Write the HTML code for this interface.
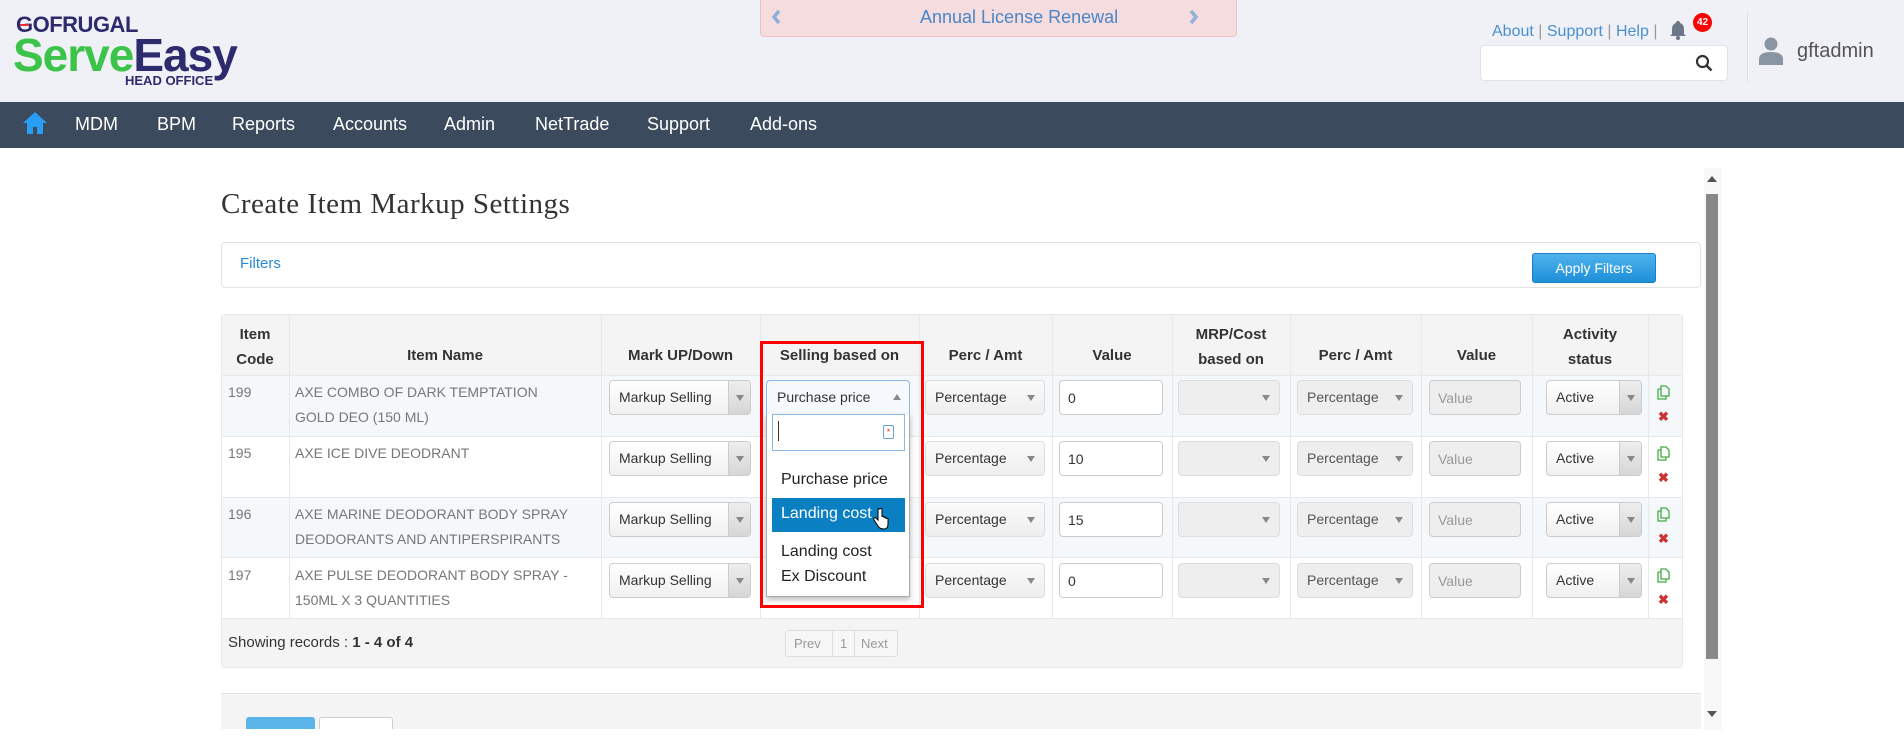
<!DOCTYPE html>
<html><head><meta charset="utf-8"><style>
*{box-sizing:border-box;margin:0;padding:0}
body{width:1904px;height:756px;overflow:hidden;background:#fff;font-family:"Liberation Sans",Arial,sans-serif;position:relative}
.a{position:absolute}
.hdr{left:0;top:0;width:1904px;height:102px;background:#f0f1f6}
.nav{left:0;top:102px;width:1904px;height:46px;background:#3c4a5e}
.th{position:absolute;font-weight:bold;font-size:15px;color:#333;text-align:center}
.td{position:absolute;font-size:14px;color:#777;line-height:25px}
.sel{position:absolute;height:35px;border:1px solid #ccc;border-radius:4px;background:linear-gradient(#fff,#f0f0f0);font-size:14px;color:#333;padding:8px 0 0 9px}
.sel .ar{position:absolute;right:0;top:0;bottom:0;width:22px;border-left:1px solid #ccc;background:linear-gradient(#eee,#d6d6d6);border-radius:0 3px 3px 0}
.sel .ar:after,.dis:after{content:"";position:absolute;left:7px;top:14px;border:4px solid transparent;border-top:6px solid #888}
.dis{position:absolute;height:35px;border:1px solid #ddd;border-radius:4px;background:#eee;font-size:14px;color:#555;padding:8px 0 0 9px}
.dis:after{left:auto;right:9px}
.inp{position:absolute;height:35px;border:1px solid #ccc;border-radius:4px;background:#fff;font-size:14px;color:#333;padding:9px 0 0 8px}
.vd{position:absolute;height:35px;border:1px solid #ccc;border-radius:4px;background:#eee;font-size:14px;color:#999;padding:9px 0 0 8px}
.ic2{position:absolute;color:#c33;font-size:13px;font-weight:bold}
</style></head><body>
<div class="a hdr"></div>
<div class="a" style="left:16px;top:12px;font-size:22px;font-weight:bold;color:#2d2a6e;letter-spacing:-0.5px">GOFRUGAL</div>
<div class="a" style="left:20px;top:24px;width:9px;height:2px;background:#e33"></div>
<div class="a" style="left:13px;top:31px;font-size:46px;font-weight:bold;letter-spacing:-1px;line-height:48px"><span style="color:#3cc34a">Serve</span><span style="color:#2d2a6e">Easy</span></div>
<div class="a" style="left:125px;top:73px;font-size:13px;font-weight:bold;color:#2d2a6e">HEAD OFFICE</div>
<div class="a" style="left:760px;top:0;width:477px;height:37px;background:#f4dcdf;border:1px solid #ecc2c8;border-top:none;border-radius:0 0 4px 4px"></div>
<svg class="a" style="left:771px;top:9px" width="10" height="16" viewBox="0 0 10 16"><path d="M8 2L3 8l5 6" fill="none" stroke="#8fb0d8" stroke-width="3.5"/></svg>
<svg class="a" style="left:1189px;top:9px" width="10" height="16" viewBox="0 0 10 16"><path d="M2 2l5 6-5 6" fill="none" stroke="#8fb0d8" stroke-width="3.5"/></svg>
<div class="a" style="left:920px;top:7px;color:#4a86c8;font-size:18px">Annual License Renewal</div>
<div class="a" style="left:1492px;top:23px;color:#4a90d0;font-size:16px">About <span style="color:#999">|</span> Support <span style="color:#999">|</span> Help <span style="color:#999">|</span></div>
<svg class="a" style="left:1669px;top:20px" width="18" height="20" viewBox="0 0 18 20"><path d="M9 1a2 2 0 0 1 2 2c3 1 4 3 4 7v4l2 2H1l2-2v-4c0-4 1-6 4-7a2 2 0 0 1 2-2z" fill="#6b7686"/><circle cx="9" cy="18" r="2" fill="#6b7686"/></svg>
<div class="a" style="left:1693px;top:13px;width:19px;height:19px;border-radius:50%;background:#f00;color:#fff;font-size:10px;font-weight:bold;text-align:center;line-height:19px">42</div>
<div class="a" style="left:1480px;top:45px;width:248px;height:36px;background:#fff;border:1px solid #e0e2e8;border-radius:4px"></div>
<svg class="a" style="left:1695px;top:54px" width="18" height="18" viewBox="0 0 18 18"><circle cx="7.5" cy="7.5" r="5.5" fill="none" stroke="#333" stroke-width="2.2"/><path d="M11.5 11.5l5 5" stroke="#333" stroke-width="2.6"/></svg>
<div class="a" style="left:1747px;top:12px;width:1px;height:70px;background:#dde"></div>
<svg class="a" style="left:1759px;top:37px" width="24" height="28" viewBox="0 0 24 28"><circle cx="12" cy="7" r="6.5" fill="#8a95a3"/><path d="M0 28v-6c0-5 5-7 12-7s12 2 12 7v6z" fill="#8a95a3"/></svg>
<div class="a" style="left:1797px;top:40px;color:#555;font-size:20px">gftadmin</div>
<div class="a nav"></div>
<svg class="a" style="left:22px;top:111px" width="26" height="24" viewBox="0 0 26 24"><path d="M13 1L1 12h4v11h6v-7h4v7h6V12h4z" fill="#2a9df4"/></svg>
<span class="a" style="left:75px;top:114px;color:#fff;font-size:18px">MDM</span>
<span class="a" style="left:157px;top:114px;color:#fff;font-size:18px">BPM</span>
<span class="a" style="left:232px;top:114px;color:#fff;font-size:18px">Reports</span>
<span class="a" style="left:333px;top:114px;color:#fff;font-size:18px">Accounts</span>
<span class="a" style="left:444px;top:114px;color:#fff;font-size:18px">Admin</span>
<span class="a" style="left:535px;top:114px;color:#fff;font-size:18px">NetTrade</span>
<span class="a" style="left:647px;top:114px;color:#fff;font-size:18px">Support</span>
<span class="a" style="left:750px;top:114px;color:#fff;font-size:18px">Add-ons</span>
<!-- scrollbar -->
<div class="a" style="left:1704px;top:168px;width:18px;height:562px;background:#f8f8f8"></div>
<div class="a" style="left:1706px;top:194px;width:12px;height:465px;background:#888"></div>
<div class="a" style="left:1707px;top:176px;border:5px solid transparent;border-bottom:6px solid #555;border-top:none"></div>
<div class="a" style="left:1707px;top:711px;border:5px solid transparent;border-top:6px solid #555;border-bottom:none"></div>
<div class="a" style="left:221px;top:188px;font-family:'Liberation Serif',serif;font-size:29px;color:#333;letter-spacing:0.5px">Create Item Markup Settings</div>
<div class="a" style="left:221px;top:242px;width:1480px;height:46px;border:1px solid #e2e2e2;border-radius:4px;background:#fff"></div>
<div class="a" style="left:240px;top:255px;color:#2a8ad8;font-size:15px">Filters</div>
<div class="a" style="left:1532px;top:253px;width:124px;height:30px;background:linear-gradient(#4fb3ee,#1d8fd8);border:1px solid #1a7fc4;border-radius:3px;color:#fff;font-size:14px;text-align:center;line-height:28px">Apply Filters</div>
<!-- table -->
<div class="a" style="left:221px;top:314px;width:1462px;height:354px;border:1px solid #e8e8e8;border-radius:4px;background:#fff"></div>
<div class="a" style="left:222px;top:315px;width:1460px;height:60px;background:#f4f4f4"></div>
<div class="a" style="left:222px;top:375px;width:1460px;height:61px;background:#f5f8fb"></div>
<div class="a" style="left:222px;top:497px;width:1460px;height:60px;background:#f5f8fb"></div>
<div class="a" style="left:222px;top:618px;width:1460px;height:49px;background:#f4f4f4"></div>
<div class="a" style="left:222px;top:375px;width:1460px;height:1px;background:#e8e8e8"></div>
<div class="a" style="left:222px;top:436px;width:1460px;height:1px;background:#e8e8e8"></div>
<div class="a" style="left:222px;top:497px;width:1460px;height:1px;background:#e8e8e8"></div>
<div class="a" style="left:222px;top:557px;width:1460px;height:1px;background:#e8e8e8"></div>
<div class="a" style="left:222px;top:618px;width:1460px;height:1px;background:#e8e8e8"></div>
<div class="a" style="left:289px;top:315px;width:1px;height:303px;background:#e8e8e8"></div>
<div class="a" style="left:601px;top:315px;width:1px;height:303px;background:#e8e8e8"></div>
<div class="a" style="left:760px;top:315px;width:1px;height:303px;background:#e8e8e8"></div>
<div class="a" style="left:919px;top:315px;width:1px;height:303px;background:#e8e8e8"></div>
<div class="a" style="left:1052px;top:315px;width:1px;height:303px;background:#e8e8e8"></div>
<div class="a" style="left:1172px;top:315px;width:1px;height:303px;background:#e8e8e8"></div>
<div class="a" style="left:1290px;top:315px;width:1px;height:303px;background:#e8e8e8"></div>
<div class="a" style="left:1421px;top:315px;width:1px;height:303px;background:#e8e8e8"></div>
<div class="a" style="left:1532px;top:315px;width:1px;height:303px;background:#e8e8e8"></div>
<div class="a" style="left:1648px;top:315px;width:1px;height:303px;background:#e8e8e8"></div>
<div class="th" style="left:221px;top:322px;width:68px;line-height:25px">Item<br>Code</div>
<div class="th" style="left:289px;top:347px;width:312px">Item Name</div>
<div class="th" style="left:601px;top:347px;width:159px">Mark UP/Down</div>
<div class="th" style="left:760px;top:347px;width:159px">Selling based on</div>
<div class="th" style="left:919px;top:347px;width:133px">Perc / Amt</div>
<div class="th" style="left:1052px;top:347px;width:120px">Value</div>
<div class="th" style="left:1172px;top:322px;width:118px;line-height:25px">MRP/Cost<br>based on</div>
<div class="th" style="left:1290px;top:347px;width:131px">Perc / Amt</div>
<div class="th" style="left:1421px;top:347px;width:111px">Value</div>
<div class="th" style="left:1532px;top:322px;width:116px;line-height:25px">Activity<br>status</div>
<!-- rows -->
<div class="td" style="left:228px;top:380px">199</div>
<div class="td" style="left:295px;top:380px">AXE COMBO OF DARK TEMPTATION<br>GOLD DEO (150 ML)</div>
<div class="td" style="left:228px;top:441px">195</div>
<div class="td" style="left:295px;top:441px">AXE ICE DIVE DEODRANT</div>
<div class="td" style="left:228px;top:502px">196</div>
<div class="td" style="left:295px;top:502px">AXE MARINE DEODORANT BODY SPRAY<br>DEODORANTS AND ANTIPERSPIRANTS</div>
<div class="td" style="left:228px;top:563px">197</div>
<div class="td" style="left:295px;top:563px">AXE PULSE DEODORANT BODY SPRAY -<br>150ML X 3 QUANTITIES</div>

<div class="sel" style="left:609px;top:380px;width:142px">Markup Selling<div class="ar"></div></div>
<div class="sel" style="left:609px;top:441px;width:142px">Markup Selling<div class="ar"></div></div>
<div class="sel" style="left:609px;top:502px;width:142px">Markup Selling<div class="ar"></div></div>
<div class="sel" style="left:609px;top:563px;width:142px">Markup Selling<div class="ar"></div></div>

<div class="dis" style="left:925px;top:380px;width:120px;background:linear-gradient(#fafafa,#eee);color:#333">Percentage</div>
<div class="dis" style="left:925px;top:441px;width:120px;background:linear-gradient(#fafafa,#eee);color:#333">Percentage</div>
<div class="dis" style="left:925px;top:502px;width:120px;background:linear-gradient(#fafafa,#eee);color:#333">Percentage</div>
<div class="dis" style="left:925px;top:563px;width:120px;background:linear-gradient(#fafafa,#eee);color:#333">Percentage</div>

<div class="inp" style="left:1059px;top:380px;width:104px">0</div>
<div class="inp" style="left:1059px;top:441px;width:104px">10</div>
<div class="inp" style="left:1059px;top:502px;width:104px">15</div>
<div class="inp" style="left:1059px;top:563px;width:104px">0</div>

<div class="dis" style="left:1178px;top:380px;width:102px"></div>
<div class="dis" style="left:1178px;top:441px;width:102px"></div>
<div class="dis" style="left:1178px;top:502px;width:102px"></div>
<div class="dis" style="left:1178px;top:563px;width:102px"></div>

<div class="dis" style="left:1297px;top:380px;width:116px">Percentage</div>
<div class="dis" style="left:1297px;top:441px;width:116px">Percentage</div>
<div class="dis" style="left:1297px;top:502px;width:116px">Percentage</div>
<div class="dis" style="left:1297px;top:563px;width:116px">Percentage</div>

<div class="vd" style="left:1429px;top:380px;width:92px">Value</div>
<div class="vd" style="left:1429px;top:441px;width:92px">Value</div>
<div class="vd" style="left:1429px;top:502px;width:92px">Value</div>
<div class="vd" style="left:1429px;top:563px;width:92px">Value</div>

<div class="sel" style="left:1546px;top:380px;width:96px">Active<div class="ar"></div></div>
<div class="sel" style="left:1546px;top:441px;width:96px">Active<div class="ar"></div></div>
<div class="sel" style="left:1546px;top:502px;width:96px">Active<div class="ar"></div></div>
<div class="sel" style="left:1546px;top:563px;width:96px">Active<div class="ar"></div></div>

<svg class="a" style="left:1657px;top:385px" width="14" height="15" viewBox="0 0 14 15"><path d="M4 1h5l3 3v7H4z M1 4h3 M1 4v10h8v-3" fill="none" stroke="#4a4" stroke-width="1.3"/></svg><div class="ic2" style="left:1658px;top:409px">✖</div>
<svg class="a" style="left:1657px;top:446px" width="14" height="15" viewBox="0 0 14 15"><path d="M4 1h5l3 3v7H4z M1 4h3 M1 4v10h8v-3" fill="none" stroke="#4a4" stroke-width="1.3"/></svg><div class="ic2" style="left:1658px;top:470px">✖</div>
<svg class="a" style="left:1657px;top:507px" width="14" height="15" viewBox="0 0 14 15"><path d="M4 1h5l3 3v7H4z M1 4h3 M1 4v10h8v-3" fill="none" stroke="#4a4" stroke-width="1.3"/></svg><div class="ic2" style="left:1658px;top:531px">✖</div>
<svg class="a" style="left:1657px;top:568px" width="14" height="15" viewBox="0 0 14 15"><path d="M4 1h5l3 3v7H4z M1 4h3 M1 4v10h8v-3" fill="none" stroke="#4a4" stroke-width="1.3"/></svg><div class="ic2" style="left:1658px;top:592px">✖</div>

<div class="a" style="left:228px;top:634px;font-size:15px;color:#333">Showing records : <b>1 - 4 of 4</b></div>
<div class="a" style="left:785px;top:630px;width:113px;height:27px;border:1px solid #ddd;border-radius:3px;background:#f6f6f6;font-size:13px;color:#999;line-height:25px"><span style="position:absolute;left:8px">Prev</span><span style="position:absolute;left:46px;top:0;height:25px;border-left:1px solid #ddd;border-right:1px solid #ddd;padding:0 7px">1</span><span style="position:absolute;left:75px">Next</span></div>

<!-- selling dropdown -->
<div class="a" style="left:766px;top:380px;width:144px;height:35px;border:1px solid #8ab8e6;border-radius:4px 4px 0 0;background:#f5f8fc;font-size:14px;color:#333;padding:8px 0 0 10px">Purchase price<span style="position:absolute;right:8px;top:13px;border:4px solid transparent;border-bottom:6px solid #888;border-top:none"></span></div>
<div class="a" style="left:766px;top:414px;width:144px;height:183px;border:1px solid #aaa;border-top:none;background:#fff;box-shadow:0 3px 5px rgba(0,0,0,.25)"></div>
<div class="a" style="left:772px;top:414px;width:133px;height:37px;border:1px solid #8ab8e6;background:#fff"></div>
<div class="a" style="left:778px;top:421px;width:1px;height:20px;background:#333"></div>
<div class="a" style="left:883px;top:425px;width:11px;height:14px;border:1px solid #6aa0d8;border-radius:2px;color:#e33;font-size:9px;line-height:12px;text-align:center">*</div>
<div class="a" style="left:781px;top:471px;font-size:16px;color:#222">Purchase price</div>
<div class="a" style="left:772px;top:498px;width:133px;height:34px;background:#0a7fc2"></div>
<div class="a" style="left:781px;top:505px;font-size:16px;color:#fff">Landing cost</div>
<svg class="a" style="left:873px;top:508px" width="16" height="22" viewBox="0 0 16 22"><path d="M5 1v11l-2-2c-1-1-3 0-2 2l4 6c1 2 3 3 6 3 3 0 4-2 4-5v-5c0-1-2-1-2 0v-1c0-1-2-1-2 0v-1c0-1-2-1-2 0V1c0-1-2-1-2 0z" fill="#fff" stroke="#000" stroke-width="1"/></svg>
<div class="a" style="left:781px;top:539px;font-size:16px;color:#222;line-height:25px">Landing cost<br>Ex Discount</div>
<div class="a" style="left:760px;top:341px;width:164px;height:267px;border:3px solid #f00"></div>

<!-- bottom area -->
<div class="a" style="left:221px;top:693px;width:1480px;height:36px;background:#f4f4f4;border-top:1px solid #e4e4e4"></div>
<div class="a" style="left:246px;top:717px;width:69px;height:12px;background:#5ab4ea;border-radius:3px 3px 0 0"></div>
<div class="a" style="left:319px;top:717px;width:74px;height:12px;background:#fff;border:1px solid #ccc;border-bottom:none;border-radius:3px 3px 0 0"></div>
</body></html>
